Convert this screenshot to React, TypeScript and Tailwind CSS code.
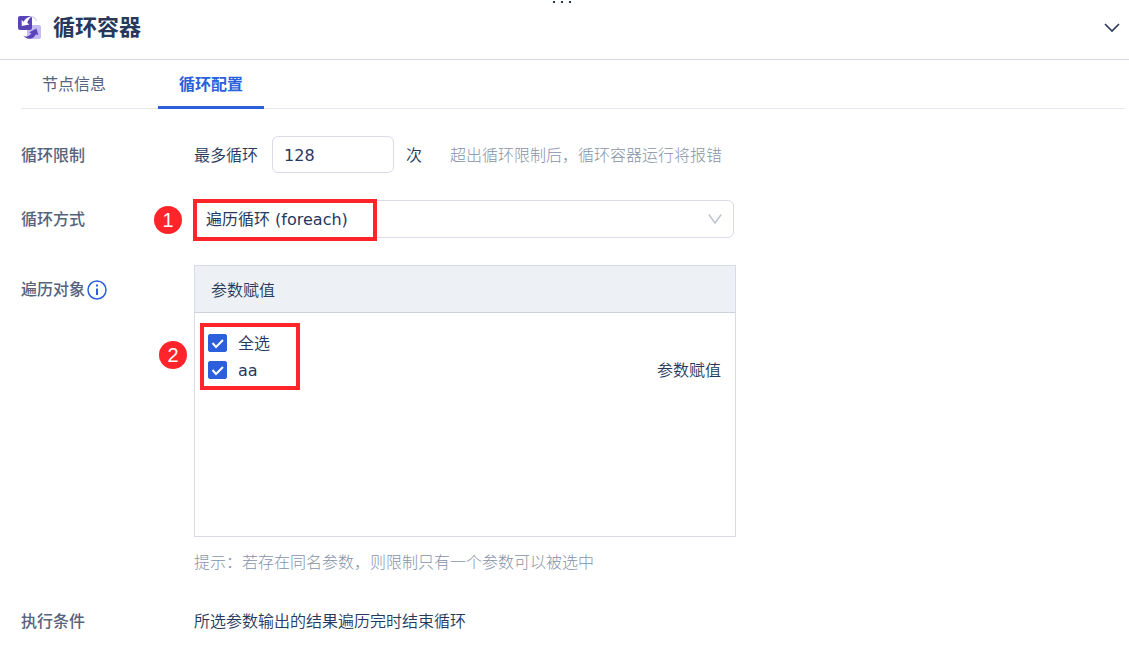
import { useState } from "react";
import type { ReactNode } from "react";

const params = [{ name: "aa", type: "参数赋值" }];

function LoopIcon() {
  return (
    <svg width="24" height="24" viewBox="0 0 24 24" aria-hidden="true">
      <rect x="9" y="9" width="14" height="14" rx="2" fill="#c3bbf1" />
      <rect x="0" y="0" width="14" height="14" rx="2" fill="#5a43b8" />
      <path d="M3.600 4 5.600 5.800C7 3 9.400 1 14 0 11.600 2 10.200 4 9.200 6.800L11.400 8.400 3.800 10Z" fill="#fff" />
      <path d="M14 .6c2.600 .4 4 1.900 4.600 4.500C17.400 3 16 1.600 14 .6Z" fill="#c3bbf1" stroke="#c3bbf1" strokeWidth=".5" />
      <path d="M5 19.200c3 2 5.500 1.600 8.400-1.600L11.400 16.200 18.400 12.400 20.400 19.200 18 18.200C15 23.600 9.500 24.600 5 19.200Z" fill="#5a43b8" />
    </svg>
  );
}

function Row({ label, htmlFor, children }: { label: ReactNode; htmlFor?: string; children: ReactNode }) {
  return (
    <div className="flex items-start">
      <label htmlFor={htmlFor} className="flex h-[37px] w-[173px] shrink-0 items-center pt-0.5 font-medium text-[#56637d]">
        {label}
      </label>
      {children}
    </div>
  );
}

function Marker({ children }: { children: ReactNode }) {
  return (
    <span className="flex size-7 items-center justify-center rounded-full bg-[#ff252b] font-['Liberation_Sans',sans-serif] text-xl text-white">
      {children}
    </span>
  );
}

function Check({ label, checked, onChange }: { label: string; checked: boolean; onChange: () => void }) {
  return (
    <label className="flex h-[27px] items-center gap-[11px]">
      <span className="relative flex">
        <input
          type="checkbox"
          checked={checked}
          onChange={onChange}
          className="h-[18px] w-[19px] appearance-none rounded-xs border border-[#2b5fdb] bg-white checked:bg-[#2b5fdb]"
        />
        <svg className="pointer-events-none absolute inset-0" width="19" height="18" viewBox="0 0 19 18" fill="none">
          <path d="m4.500 9 3.500 4 7-7" stroke="#fff" strokeWidth="2" />
        </svg>
      </span>
      <span className="pt-0.5">{label}</span>
    </label>
  );
}

export default function App() {
  const [tab, setTab] = useState("循环配置");
  const [limit, setLimit] = useState("128");
  const [selected, setSelected] = useState<string[]>(["aa"]);

  const allSelected = selected.length === params.length;

  function toggle(name: string) {
    setSelected(selected.includes(name) ? selected.filter((n) => n !== name) : [...selected, name]);
  }

  return (
    <div className="bg-white font-['DejaVu_Sans','Noto_Sans_CJK_SC',sans-serif] text-base text-[#26395c]">
      <header className="relative flex h-[60px] items-center border-b border-[#d9dbe4] pr-2 pb-1 pl-[18px]">
        <button aria-label="拖动" className="absolute top-0 left-1/2 flex h-[3px] -translate-x-3 items-center gap-1.5 pt-px">
          <i className="size-0.5 bg-[#26395c]" />
          <i className="size-0.5 bg-[#26395c]" />
          <i className="size-0.5 bg-[#26395c]" />
        </button>
        <LoopIcon />
        <h1 className="ml-[11px] text-[22px] font-bold">循环容器</h1>
        <button aria-label="收起" className="ml-auto">
          <svg width="18" height="18" viewBox="0 0 18 18" fill="none">
            <path d="m2 5 7 7 7-7" stroke="#26395c" strokeWidth="1.600" />
          </svg>
        </button>
      </header>

      <nav className="mr-1 ml-[21px] flex h-[49px] gap-[31px] border-b border-[#e6e8f0]">
        {["节点信息", "循环配置"].map((name) => (
          <button
            key={name}
            onClick={() => setTab(name)}
            className={
              tab === name
                ? "-mb-px w-[106px] border-b-3 border-[#2b5fdb] pt-1 font-bold text-[#2b5fdb]"
                : "-mb-px w-[106px] border-b-3 border-transparent pt-1 text-[#56637d]"
            }
          >
            {name}
          </button>
        ))}
      </nav>

      <main className="flex flex-col gap-[27px] px-[21px] pt-[27px] pb-2">
        <Row label="循环限制" htmlFor="limit">
          <div className="flex h-[37px] items-center">
            <span className="pt-0.5 font-[350]">最多循环</span>
            <input
              id="limit"
              value={limit}
              onChange={(e) => setLimit(e.target.value)}
              className="mr-3 ml-3.5 h-full w-[122px] rounded-md border border-[#d9dbe8] px-[11px] pt-0.5 outline-none focus:border-[#2b5fdb]"
            />
            <span className="pt-0.5 font-[350]">次</span>
            <span className="ml-7 pt-0.5 font-light text-[#8793a8]">超出循环限制后，循环容器运行将报错</span>
          </div>
        </Row>

        <Row label="循环方式" htmlFor="mode">
          <div className="relative w-full max-w-[540px]">
            <select
              id="mode"
              className="block h-[38px] w-full appearance-none rounded-md border border-[#d9dbe8] bg-white px-[11px] pt-0.5 outline-none"
            >
              <option>遍历循环 (foreach)</option>
            </select>
            <svg className="pointer-events-none absolute top-3 right-3" width="14" height="14" viewBox="0 0 14 14" fill="none">
              <path d="m.8 2.500 6.200 8.500 6.200-8.500" stroke="#bcc2ce" strokeWidth="1.400" />
            </svg>
            <div className="pointer-events-none absolute -top-px -left-px h-[42px] w-[184px] border-4 border-[#ff252b]" />
            <div className="absolute top-1.5 -left-10">
              <Marker>1</Marker>
            </div>
          </div>
        </Row>

        <Row
          label={
            <span className="mt-2.5 flex items-center">
              遍历对象
              <svg width="22" height="22" viewBox="0 0 22 22" fill="none" stroke="#2b5fdb" aria-label="说明">
                <circle cx="12" cy="11" r="9" strokeWidth="1.500" />
                <path d="M12 9.500v6.500M12 5.500v2" strokeWidth="2" />
              </svg>
            </span>
          }
        >
          <div className="w-full max-w-[542px]">
            <div className="relative h-[272px] border border-[#d9dbe4]">
              <table className="w-full border-separate border-spacing-0">
                <thead>
                  <tr>
                    <th colSpan={2} className="h-[47px] border-b border-[#cdd1dd] bg-[#edf0f5] px-4 pt-1 text-left font-[350]">
                      参数赋值
                    </th>
                  </tr>
                </thead>
                <tbody>
                  <tr>
                    <td colSpan={2} className="pt-4 pl-[13px] font-[350]">
                      <Check
                        label="全选"
                        checked={allSelected}
                        onChange={() => setSelected(allSelected ? [] : params.map((p) => p.name))}
                      />
                    </td>
                  </tr>
                  {params.map((p) => (
                    <tr key={p.name}>
                      <td className="pl-[13px]">
                        <Check label={p.name} checked={selected.includes(p.name)} onChange={() => toggle(p.name)} />
                      </td>
                      <td className="pt-0.5 pr-3.5 text-right font-[350]">{p.type}</td>
                    </tr>
                  ))}
                </tbody>
              </table>
              <div className="pointer-events-none absolute top-[57px] left-[5px] h-[67px] w-[100px] border-4 border-[#ff252b]" />
              <div className="absolute top-[75px] -left-9">
                <Marker>2</Marker>
              </div>
            </div>
            <p className="mt-3.5 font-light text-[#8793a8]">提示：若存在同名参数，则限制只有一个参数可以被选中</p>
          </div>
        </Row>

        <Row label="执行条件">
          <p className="flex min-h-[37px] items-center pt-0.5 font-[350]">所选参数输出的结果遍历完时结束循环</p>
        </Row>
      </main>
    </div>
  );
}
